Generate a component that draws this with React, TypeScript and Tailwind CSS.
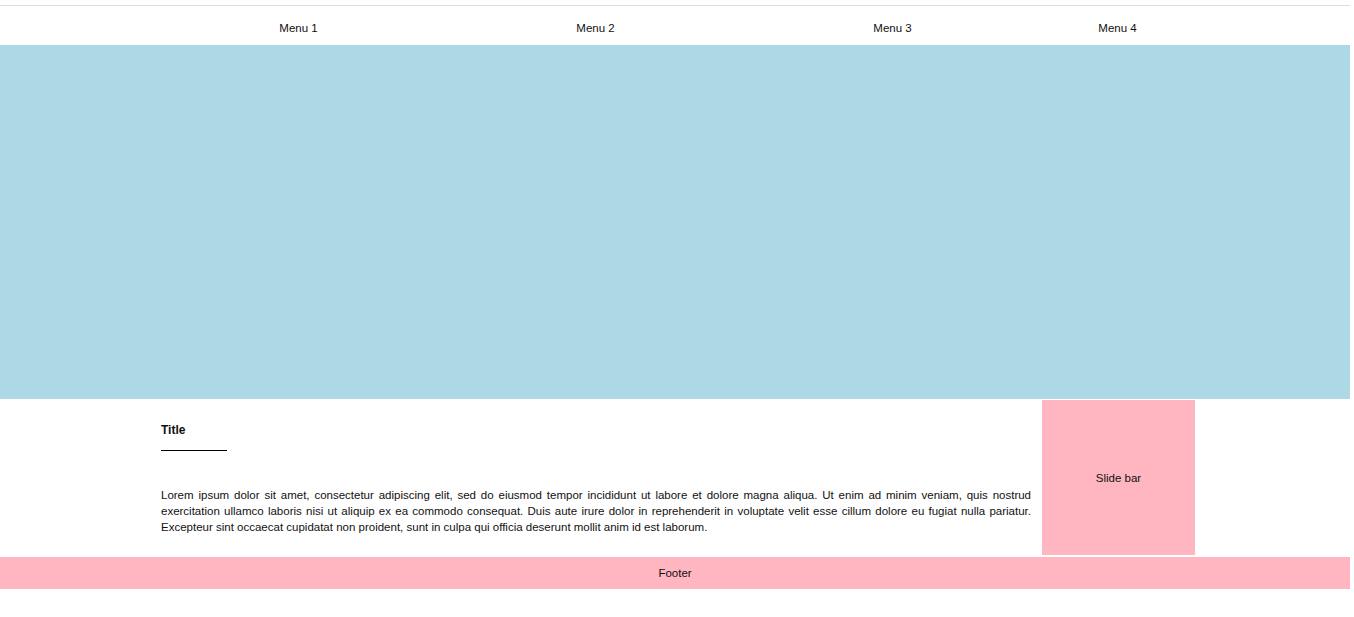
export default function App() {
  const menus = ["Menu 1", "Menu 2", "Menu 3"];

  return (
    <div className="w-[1350px] font-['Liberation_Sans',Arial,sans-serif] text-[#111]">
      {/* top rule + nav */}
      <div className="mt-[5px] border-t border-[#dddddd]">
        <nav className="ml-[150px] flex h-[39px] w-[1045px] items-center text-[11.5px]">
          {menus.map((m) => (
            <div key={m} className="w-[297px] pt-[7px] text-center">
              {m}
            </div>
          ))}
          <div className="w-[153px] pt-[7px] text-center">Menu 4</div>
        </nav>
      </div>

      {/* hero */}
      <div className="h-[354px] bg-[#add8e6]" />

      {/* content + sidebar */}
      <div className="ml-[150px] flex h-[157px] w-[1045px]">
        <main className="w-[892px] px-[11px] pt-[23px]">
          <h3 className="text-[12px] font-bold leading-[16px]">Title</h3>
          <div className="mt-[12px] h-px w-[66px] bg-black" />
          <p className="mt-[36px] text-justify text-[11.5px] leading-[16px]">
            Lorem ipsum dolor sit amet, consectetur adipiscing elit, sed do eiusmod tempor incididunt ut labore et
            dolore magna aliqua. Ut enim ad minim veniam, quis nostrud exercitation ullamco laboris nisi ut aliquip ex
            ea commodo consequat. Duis aute irure dolor in reprehenderit in voluptate velit esse cillum dolore eu fugiat
            nulla pariatur. Excepteur sint occaecat cupidatat non proident, sunt in culpa qui officia deserunt mollit
            anim id est laborum.
          </p>
        </main>
        <aside className="my-px flex w-[153px] items-center justify-center bg-[#ffb6c1] pt-[2px] text-[11.5px]">
          Slide bar
        </aside>
      </div>

      {/* footer */}
      <footer className="mt-px flex h-[32px] items-center justify-center bg-[#ffb6c1] pt-[2px] text-[11.5px]">
        Footer
      </footer>
    </div>
  );
}
